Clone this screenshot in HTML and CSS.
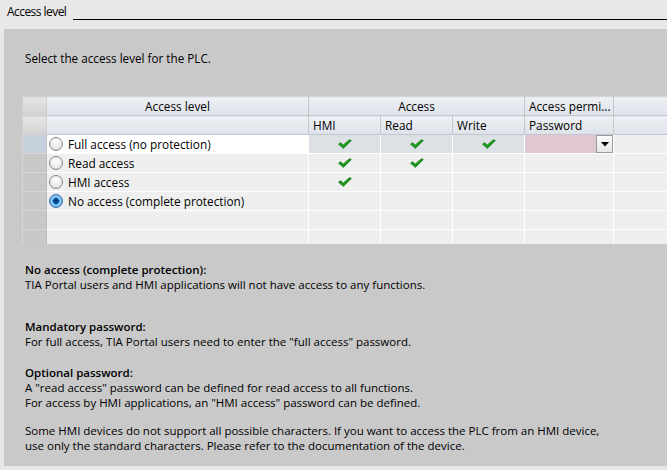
FILE: index.html
```html
<!DOCTYPE html>
<html>
<head>
<meta charset="utf-8">
<link rel="stylesheet" href="styles.css">
</head>
<body>
<div class="titlebar">
  <span class="title">Access level</span>
  <span class="rule"></span>
</div>
<div class="panel">
  <p class="intro">Select the access level for the PLC.</p>
  <div class="tablewrap">
    <table class="grid">
      <colgroup>
        <col class="c-rh"><col class="c-lvl"><col class="c-a"><col class="c-a"><col class="c-a"><col class="c-pw"><col class="c-fill">
      </colgroup>
      <thead>
        <tr class="h1">
          <th class="rh"></th>
          <th class="center">Access level</th>
          <th class="center" colspan="3">Access</th>
          <th class="left">Access permi...</th>
          <th class="fill"></th>
        </tr>
        <tr class="h2">
          <th class="rh"></th>
          <th></th>
          <th class="left">HMI</th>
          <th class="left">Read</th>
          <th class="left">Write</th>
          <th class="left">Password</th>
          <th class="fill"></th>
        </tr>
      </thead>
      <tbody>
        <tr class="sel">
          <td class="rh"></td>
          <td class="lvl"><div class="opt"><span class="radio"></span>Full access (no protection)</div></td>
          <td class="chk"><svg class="tick" viewBox="0 0 14 10" width="14" height="10"><path d="M0.5 5.2 L2.6 3.6 L5.2 6 L11.6 0.6 L13.4 1.6 L5.4 9.4 Z" fill="#1e9a1e" stroke="#137013" stroke-width="0.6"/></svg></td>
          <td class="chk"><svg class="tick" viewBox="0 0 14 10" width="14" height="10"><path d="M0.5 5.2 L2.6 3.6 L5.2 6 L11.6 0.6 L13.4 1.6 L5.4 9.4 Z" fill="#1e9a1e" stroke="#137013" stroke-width="0.6"/></svg></td>
          <td class="chk"><svg class="tick" viewBox="0 0 14 10" width="14" height="10"><path d="M0.5 5.2 L2.6 3.6 L5.2 6 L11.6 0.6 L13.4 1.6 L5.4 9.4 Z" fill="#1e9a1e" stroke="#137013" stroke-width="0.6"/></svg></td>
          <td class="pw"><div class="pwbox"><span class="pwfield"></span><span class="ddbtn"><svg viewBox="0 0 8 5" width="8" height="5"><path d="M0 0 L8 0 L4 4.5 Z" fill="#000"/></svg></span></div></td>
          <td class="fill"></td>
        </tr>
        <tr>
          <td class="rh"></td>
          <td class="lvl"><div class="opt"><span class="radio"></span>Read access</div></td>
          <td class="chk"><svg class="tick" viewBox="0 0 14 10" width="14" height="10"><path d="M0.5 5.2 L2.6 3.6 L5.2 6 L11.6 0.6 L13.4 1.6 L5.4 9.4 Z" fill="#1e9a1e" stroke="#137013" stroke-width="0.6"/></svg></td>
          <td class="chk"><svg class="tick" viewBox="0 0 14 10" width="14" height="10"><path d="M0.5 5.2 L2.6 3.6 L5.2 6 L11.6 0.6 L13.4 1.6 L5.4 9.4 Z" fill="#1e9a1e" stroke="#137013" stroke-width="0.6"/></svg></td>
          <td></td><td></td><td class="fill"></td>
        </tr>
        <tr>
          <td class="rh"></td>
          <td class="lvl"><div class="opt"><span class="radio"></span>HMI access</div></td>
          <td class="chk"><svg class="tick" viewBox="0 0 14 10" width="14" height="10"><path d="M0.5 5.2 L2.6 3.6 L5.2 6 L11.6 0.6 L13.4 1.6 L5.4 9.4 Z" fill="#1e9a1e" stroke="#137013" stroke-width="0.6"/></svg></td>
          <td></td><td></td><td></td><td class="fill"></td>
        </tr>
        <tr>
          <td class="rh"></td>
          <td class="lvl"><div class="opt"><span class="radio on"></span>No access (complete protection)</div></td>
          <td></td><td></td><td></td><td></td><td class="fill"></td>
        </tr>
        <tr>
          <td class="rh"></td><td></td><td></td><td></td><td></td><td></td><td class="fill"></td>
        </tr>
        <tr class="last">
          <td class="rh"></td><td></td><td></td><td></td><td></td><td></td><td class="fill"></td>
        </tr>
      </tbody>
    </table>
  </div>
  <div class="notes">
    <div class="note n1">
      <div class="head">No access (complete protection):</div>
      <div>TIA Portal users and HMI applications will not have access to any functions.</div>
    </div>
    <div class="note n2">
      <div class="head">Mandatory password:</div>
      <div>For full access, TIA Portal users need to enter the "full access" password.</div>
    </div>
    <div class="note n3">
      <div class="head">Optional password:</div>
      <div>A "read access" password can be defined for read access to all functions.</div>
      <div>For access by HMI applications, an "HMI access" password can be defined.</div>
    </div>
    <div class="note n4">
      <div>Some HMI devices do not support all possible characters. If you want to access the PLC from an HMI device,</div>
      <div>use only the standard characters. Please refer to the documentation of the device.</div>
    </div>
  </div>
</div>
</body>
</html>
```
FILE: styles.css
```css
html, body {
  margin: 0;
  padding: 0;
}
body {
  width: 667px;
  height: 470px;
  overflow: hidden;
  background: #e8e8e8;
  font-family: "Open Sans", "Noto Sans", sans-serif;
  color: #000;
}
.titlebar {
  height: 29px;
  display: flex;
  align-items: flex-start;
  padding-left: 7px;
  box-sizing: border-box;
}
.title {
  font-size: 12px;
  letter-spacing: -0.55px;
  line-height: 14px;
  margin-top: 5px;
  white-space: nowrap;
}
.rule {
  flex: 1;
  margin-left: 7px;
  margin-top: 19px;
  height: 1px;
  background: #000;
}
.panel {
  margin-left: 4px;
  height: 437px;
  background: #c9c9c9;
  overflow: hidden;
  box-sizing: border-box;
  padding-top: 22px;
}
.intro {
  margin: 0 0 0 21px;
  font-size: 11.7px;
  line-height: 15px;
}
.tablewrap {
  margin-top: 30px;
  margin-left: 18px;
  width: 700px;
  height: 149px;
  overflow: hidden;
}
.grid {
  border-collapse: collapse;
  table-layout: fixed;
  width: 700px;
  font-size: 11.8px;
}
.c-rh { width: 24px; }
.c-lvl { width: 262px; }
.c-a { width: 72px; }
.c-pw { width: 89px; }
.c-fill { width: 109px; }
.grid th, .grid td {
  padding: 0;
  white-space: nowrap;
  overflow: hidden;
}
.grid th {
  height: 18px;
  font-weight: normal;
  background: linear-gradient(#eef0f4, #dde2ea);
  border: 1px solid #c3c6cb;
  border-top-color: #d4d6d9;
  line-height: 17px;
}
.grid th.center { text-align: center; }
.grid th.left { text-align: left; padding-left: 4px; }
.grid th.rh {
  background: linear-gradient(#e6e6e6, #d2d2d2);
  border-color: #cfcfcf;
}
.grid th.fill {
  border-right: none;
}
.grid td {
  height: 18px;
  background: #efefef;
  border: 1px solid #fff;
  border-top: none;
  line-height: 18px;
}
.grid td.rh {
  background: #c8c8c8;
  border-color: #d6d6d6;
  border-right: 1px solid #bdbdbd;
  border-left-color: #d8d8d8;
}
.grid tr.sel td.rh { background: #c7d1dd; }
.grid tr.sel td.lvl { background: #fff; border-right-color: #fff; }
.grid tr.sel td.chk { background: #dde1e6; }
.grid tr.sel td.pw { background: #dde1e6; }
.grid tr.last td { height: 14px; border-bottom: none; }
.grid td.fill { border-right: none; }
.opt {
  display: flex;
  align-items: center;
  height: 18px;
  padding-left: 2px;
}
.radio {
  flex: none;
  width: 12px;
  height: 12px;
  border-radius: 50%;
  border: 1px solid #8a8a8a;
  background: radial-gradient(circle at 50% 35%, #ffffff 0%, #eeeeee 50%, #cfcfcf 100%);
  margin-right: 5px;
}
.radio.on {
  border-color: #3672b0;
  background: radial-gradient(circle, #0a3f87 0 2.5px, #3aa2ec 3px, #9fd3f7 5px, #5c9ed6 6px);
}
.grid td.chk {
  text-align: center;
}
.tick {
  vertical-align: middle;
  margin-top: -3px;
}
.pwbox {
  display: flex;
  height: 18px;
}
.pwfield {
  flex: 1;
  background: #e0c8d3;
}
.ddbtn {
  width: 15px;
  height: 16px;
  border: 1px solid #9a9a9a;
  background: linear-gradient(#fdfdfd, #e6e6e6);
  display: flex;
  align-items: center;
  justify-content: center;
}
.notes {
  margin-left: 21px;
  font-size: 11.5px;
  line-height: 15px;
}
.note .head { font-weight: 600; }
.n1 { margin-top: 17px; }
.n2 { margin-top: 27px; }
.n3 { margin-top: 16px; }
.n4 { margin-top: 13px; }
```
